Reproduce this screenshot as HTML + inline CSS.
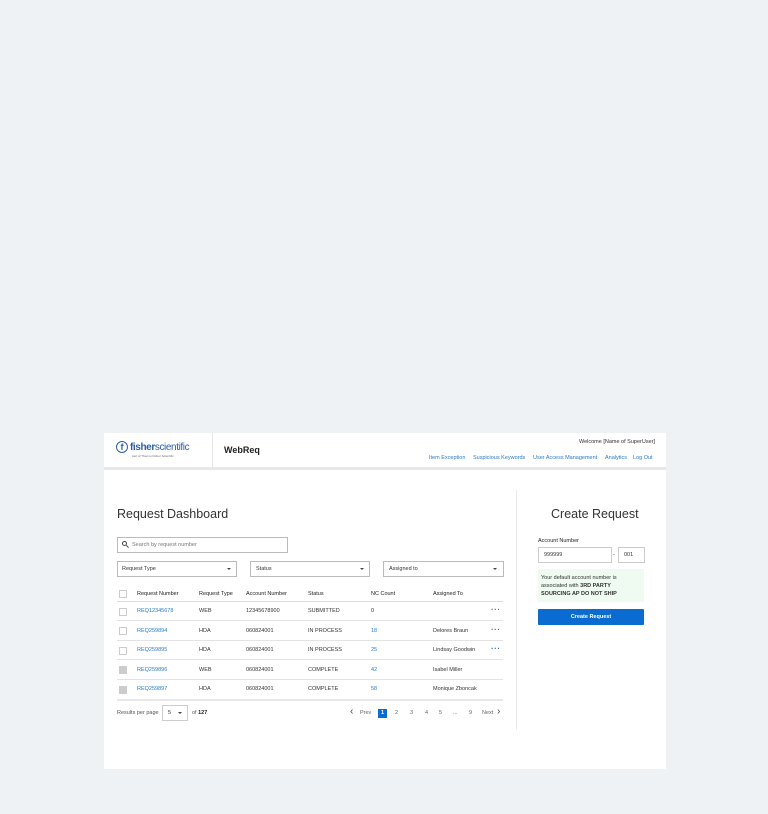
<!DOCTYPE html>
<html><head><style>
*{margin:0;padding:0;box-sizing:border-box}
body{width:768px;height:814px;background:#eff2f5;font-family:"Liberation Sans",Arial,sans-serif;position:relative;overflow:hidden;color:#333}
.a{position:absolute;white-space:nowrap}
.card{position:absolute;left:104px;top:433px;width:562px;height:336px;background:#fff}
.s{font-size:5.5px}
.blue{color:#2a7bc8}
.box{position:absolute;border:1px solid #bbb;background:#fff}
.cb{position:absolute;width:8px;height:8px;border:1px solid #ccc;background:#fff}
.cb.g{background:#ccc;border-color:#ccc}
.line{position:absolute;height:1px;background:#e3e3e3;left:117px;width:386px}
.tri{position:absolute;width:0;height:0;border-left:2px solid transparent;border-right:2px solid transparent;border-top:2.5px solid #444}
.dots{position:absolute;left:491px;font-size:8px;font-weight:bold;color:#2a7bc8;letter-spacing:0.5px}
</style></head><body>
<div class="card"></div>
<div class="a" style="left:104px;top:467px;width:562px;height:3px;background:#e6e8eb"></div>
<div class="a" style="left:212px;top:433px;width:1px;height:34px;background:#e6e6e6"></div>
<div class="a" style="left:116px;top:441px;width:12px;height:12px;border:1.3px solid #2a5fa8;border-radius:50%;color:#2a5fa8;font-size:9px;font-weight:bold;text-align:center;line-height:10px">f</div>
<div class="a" style="left:130px;top:442px;font-size:10px;color:#2a5fa8;letter-spacing:-0.4px"><b>fisher</b>scientific</div>
<div class="a" style="left:132px;top:454px;font-size:3px;color:#666">part of Thermo Fisher Scientific</div>
<div class="a" style="left:224px;top:445px;font-size:9px;font-weight:bold;color:#222">WebReq</div>
<div class="a s" style="right:113px;top:439px;color:#333">Welcome [Name of SuperUser]</div>
<div class="a s blue" style="left:429px;top:455px">Item Exception</div>
<div class="a s blue" style="left:473px;top:455px">Suspicious Keywords</div>
<div class="a s blue" style="left:533px;top:455px">User Access Management</div>
<div class="a s blue" style="left:605px;top:455px">Analytics</div>
<div class="a s blue" style="left:633px;top:455px">Log Out</div>
<div class="a" style="left:117px;top:507px;font-size:12.5px;color:#333">Request Dashboard</div>
<div class="box" style="left:117px;top:537px;width:171px;height:16px"></div>
<div class="a" style="left:122px;top:541px;width:5px;height:5px;border:1px solid #444;border-radius:50%"></div>
<div class="a" style="left:126px;top:546px;width:3px;height:1px;background:#444;transform:rotate(45deg)"></div>
<div class="a s" style="left:132px;top:542px;color:#777">Search by request number</div>
<div class="box" style="left:117px;top:561px;width:120px;height:16px"></div>
<div class="a s" style="left:122px;top:566px">Request Type</div><div class="tri" style="left:227px;top:568px"></div>
<div class="box" style="left:250px;top:561px;width:120px;height:16px"></div>
<div class="a s" style="left:256px;top:566px">Status</div><div class="tri" style="left:360px;top:568px"></div>
<div class="box" style="left:383px;top:561px;width:121px;height:16px"></div>
<div class="a s" style="left:389px;top:566px">Assigned to</div><div class="tri" style="left:493px;top:568px"></div>
<div class="cb" style="left:119px;top:590px"></div>
<div class="a s" style="left:137px;top:591px;color:#222">Request Number</div>
<div class="a s" style="left:199px;top:591px;color:#222">Request Type</div>
<div class="a s" style="left:246px;top:591px;color:#222">Account Number</div>
<div class="a s" style="left:308px;top:591px;color:#222">Status</div>
<div class="a s" style="left:371px;top:591px;color:#222">NC Count</div>
<div class="a s" style="left:433px;top:591px;color:#222">Assigned To</div>
<div class="line" style="top:601px;background:#ddd"></div>
<div class="cb" style="left:119px;top:608px"></div>
<div class="a s blue" style="left:137px;top:608px">REQ12345678</div><div class="a s" style="left:199px;top:608px">WEB</div><div class="a s" style="left:246px;top:608px">12345678900</div><div class="a s" style="left:308px;top:608px">SUBMITTED</div><div class="a s" style="left:371px;top:608px">0</div><div class="a dots" style="top:605px">···</div>
<div class="line" style="top:620px"></div>
<div class="cb" style="left:119px;top:627px"></div>
<div class="a s blue" style="left:137px;top:628px">REQ259894</div><div class="a s" style="left:199px;top:628px">HDA</div><div class="a s" style="left:246px;top:628px">060824001</div><div class="a s" style="left:308px;top:628px">IN PROCESS</div><div class="a s blue" style="left:371px;top:628px">18</div><div class="a s" style="left:433px;top:628px">Delores Braun</div><div class="a dots" style="top:625px">···</div>
<div class="line" style="top:640px"></div>
<div class="cb" style="left:119px;top:647px"></div>
<div class="a s blue" style="left:137px;top:647px">REQ259895</div><div class="a s" style="left:199px;top:647px">HDA</div><div class="a s" style="left:246px;top:647px">060824001</div><div class="a s" style="left:308px;top:647px">IN PROCESS</div><div class="a s blue" style="left:371px;top:647px">25</div><div class="a s" style="left:433px;top:647px">Lindsay Goodwin</div><div class="a dots" style="top:644px">···</div>
<div class="line" style="top:659px"></div>
<div class="cb g" style="left:119px;top:666px"></div>
<div class="a s blue" style="left:137px;top:667px">REQ259896</div><div class="a s" style="left:199px;top:667px">WEB</div><div class="a s" style="left:246px;top:667px">060824001</div><div class="a s" style="left:308px;top:667px">COMPLETE</div><div class="a s blue" style="left:371px;top:667px">42</div><div class="a s" style="left:433px;top:667px">Isabel Miller</div>
<div class="line" style="top:679px"></div>
<div class="cb g" style="left:119px;top:686px"></div>
<div class="a s blue" style="left:137px;top:686px">REQ259897</div><div class="a s" style="left:199px;top:686px">HDA</div><div class="a s" style="left:246px;top:686px">060824001</div><div class="a s" style="left:308px;top:686px">COMPLETE</div><div class="a s blue" style="left:371px;top:686px">58</div><div class="a s" style="left:433px;top:686px">Monique Zboncak</div>
<div class="line" style="top:699px;height:2px;background:#e8e8e8"></div>
<div class="a s" style="left:117px;top:710px;color:#555">Results per page</div>
<div class="box" style="left:162px;top:705px;width:26px;height:16px;border-color:#ccc"></div>
<div class="a s" style="left:168px;top:710px">5</div><div class="tri" style="left:178px;top:712px;border-top-width:2px"></div>
<div class="a s" style="left:192px;top:710px;color:#555">of <b style="color:#222">127</b></div>
<div class="a" style="left:350px;top:706px;font-size:10px;color:#444">‹</div>
<div class="a s" style="left:360px;top:710px;color:#666">Prev</div>
<div class="a" style="left:378px;top:709px;width:9px;height:9px;background:#0a6bd1;color:#fff;font-size:5.5px;text-align:center;line-height:9px;font-weight:bold">1</div>
<div class="a s" style="left:395px;top:710px;color:#666">2</div>
<div class="a s" style="left:410px;top:710px;color:#666">3</div>
<div class="a s" style="left:425px;top:710px;color:#666">4</div>
<div class="a s" style="left:439px;top:710px;color:#666">5</div>
<div class="a s" style="left:453px;top:710px;color:#666">...</div>
<div class="a s" style="left:469px;top:710px;color:#666">9</div>
<div class="a s" style="left:482px;top:710px;color:#666">Next</div>
<div class="a" style="left:497px;top:706px;font-size:10px;color:#444">›</div>
<div class="a" style="left:516px;top:490px;width:1px;height:240px;background:#ececec"></div>
<div class="a" style="left:551px;top:507px;font-size:12.5px;color:#333">Create Request</div>
<div class="a s" style="left:538px;top:538px;color:#222">Account Number</div>
<div class="box" style="left:538px;top:547px;width:74px;height:16px;border-color:#ccc"></div>
<div class="a s" style="left:544px;top:552px">999999</div>
<div class="a s" style="left:613px;top:552px">-</div>
<div class="box" style="left:618px;top:547px;width:27px;height:16px;border-color:#ccc"></div>
<div class="a s" style="left:624px;top:552px">001</div>
<div class="a" style="left:538px;top:569px;width:106px;height:33px;background:#effaf0"></div>
<div class="a s" style="left:541px;top:574px;line-height:8px;color:#333">Your default account number is<br>associated with <b>3RD PARTY<br>SOURCING AP DO NOT SHIP</b></div>
<div class="a" style="left:538px;top:609px;width:106px;height:16px;background:#0a6bd1;border-radius:1px;color:#fff;font-size:5.5px;font-weight:bold;text-align:center;line-height:16px">Create Request</div>
</body></html>
